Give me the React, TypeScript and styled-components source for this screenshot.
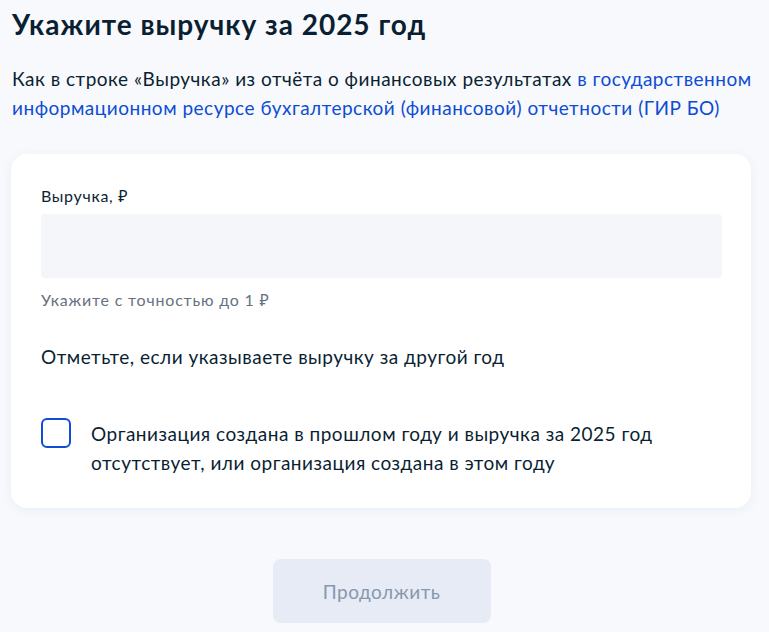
import styled, { createGlobalStyle } from "styled-components";
import { useState } from "react";

const GlobalStyle = createGlobalStyle`
  html, body {
    margin: 0;
    padding: 0;
    background: #f7f9fc;
  }
  body {
    font-family: Lato, "Noto Sans", sans-serif;
    color: #0b1f33;
  }
`;

const App = () => {
  const [checked, setChecked] = useState(false);

  return (
    <>
      <GlobalStyle />
      <Page>
        <Title>Укажите выручку за 2025 год</Title>
        <Lead>
          Как в строке «Выручка» из отчёта о финансовых результатах{" "}
          <Link href="#">
            в государственном информационном ресурсе бухгалтерской (финансовой) отчетности (ГИР БО)
          </Link>
        </Lead>
        <Card>
          <Label>Выручка, ₽</Label>
          <Input type="text" />
          <Hint>Укажите с точностью до 1 ₽</Hint>
          <Question>Отметьте, если указываете выручку за другой год</Question>
          <CheckRow onClick={() => setChecked(!checked)}>
            <Box className={checked ? "checked" : ""} />
            <CheckText>
              Организация создана в прошлом году и выручка за 2025 год
              отсутствует, или организация создана в этом году
            </CheckText>
          </CheckRow>
        </Card>
        <Footer>
          <Button disabled>Продолжить</Button>
        </Footer>
      </Page>
    </>
  );
};

const Page = styled.div`
  padding: 6px 11px 9px 12px;
  width: 739px;
`;

const Title = styled.h1`
  margin: 0;
  font-size: 28px;
  line-height: 36px;
  letter-spacing: 1px;
  font-weight: 700;
  color: #0b1f33;
`;

const Lead = styled.p`
  margin: 22px -16px 0 0;
  font-size: 19px;
  line-height: 29px;
  letter-spacing: 0.5px;
  color: #0b1f33;
`;

const Link = styled.a`
  color: #0d4cd3;
  text-decoration: none;
`;

const Card = styled.div`
  margin-top: 32px;
  margin-left: -1px;
  background: #fff;
  border-radius: 16px;
  box-shadow: 0 2px 8px rgba(232, 236, 245, 0.9);
  padding: 30px 29px 31px 30px;
  display: flex;
  flex-direction: column;
`;

const Label = styled.label`
  font-size: 16px;
  line-height: 24px;
  letter-spacing: 0.7px;
`;

const Input = styled.input`
  margin-top: 6px;
  height: 64px;
  box-sizing: border-box;
  border: none;
  border-radius: 4px;
  background: #f5f6fa;
  padding: 0 16px;
  font-family: inherit;
  font-size: 18px;
  outline: none;
`;

const Hint = styled.div`
  margin-top: 10px;
  font-size: 16px;
  line-height: 24px;
  letter-spacing: 0.8px;
  color: #66727f;
`;

const Question = styled.div`
  margin-top: 33px;
  font-size: 19px;
  line-height: 24px;
  letter-spacing: 0.5px;
`;

const CheckRow = styled.div`
  margin-top: 47px;
  display: flex;
  gap: 20px;
  cursor: pointer;
`;

const Box = styled.span`
  flex: none;
  width: 26px;
  height: 26px;
  margin-top: 2px;
  border: 2px solid #0d4cd3;
  border-radius: 6px;
  &.checked {
    background: #0d4cd3;
  }
`;

const CheckText = styled.div`
  padding-top: 3px;
  font-size: 19px;
  line-height: 29px;
  letter-spacing: 0.5px;
`;

const Footer = styled.div`
  display: flex;
  justify-content: center;
  margin-top: 51px;
`;

const Button = styled.button`
  width: 218px;
  height: 64px;
  border: none;
  border-radius: 8px;
  background: #e6ebf5;
  color: #8797ad;
  font-family: inherit;
  font-size: 19px;
  letter-spacing: 0.5px;
`;

export default App;
